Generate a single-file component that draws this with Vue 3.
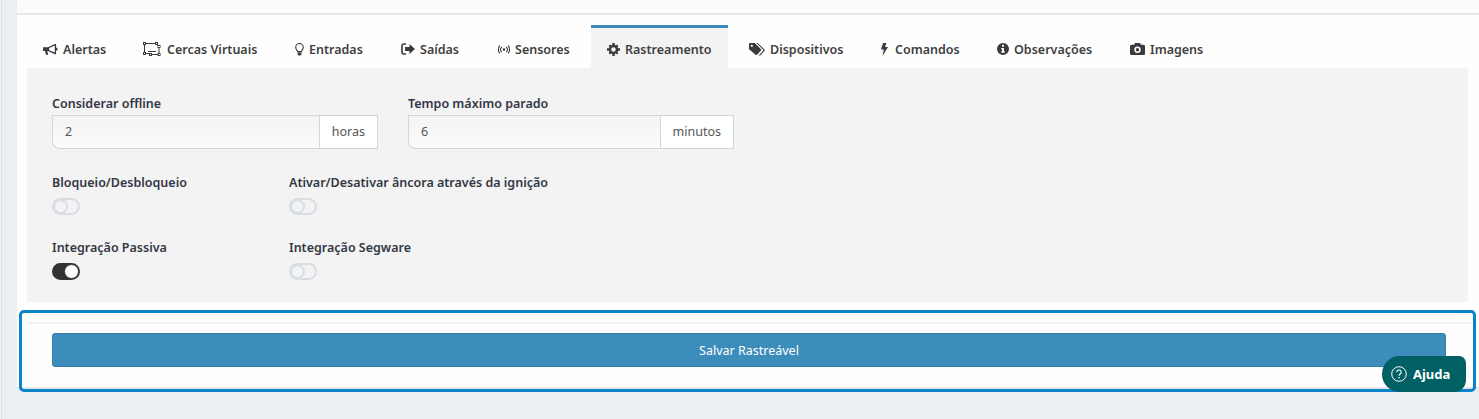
<script setup>
const tabs = [
  { label: 'Alertas', icon: 'bullhorn', width: 95 },
  { label: 'Cercas Virtuais', icon: 'fence', width: 147 },
  { label: 'Entradas', icon: 'bulb', width: 101 },
  { label: 'Saídas', icon: 'signout', width: 92 },
  { label: 'Sensores', icon: 'sensor', width: 104 },
  { label: 'Rastreamento', icon: 'cog', width: 137, active: true },
  { label: 'Dispositivos', icon: 'tags', width: 127 },
  { label: 'Comandos', icon: 'bolt', width: 111 },
  { label: 'Observações', icon: 'info', width: 128 },
  { label: 'Imagens', icon: 'camera', width: 105 },
]
</script>

<template>
  <div class="page">
    <div class="content">
      <div class="topbar"></div>
      <div class="card">
        <div class="tabs">
          <div v-for="tab in tabs" :key="tab.label" class="tab" :class="{ active: tab.active }" :style="{ width: tab.width + 'px' }">
            <svg v-if="tab.icon === 'bullhorn'" class="icon" width="15" height="13" viewBox="0 0 16 14">
              <path d="M0 4.500h5.200L12.600 1h1.400v11h-1.400L5.200 8.600H4.600l.9 4H3l-.8-4H0z" />
              <path d="M12.600 2.800 6.600 5.300v2.600l6 2.400z" fill="#fff" />
              <path d="M14 5h1.500v3H14z" />
            </svg>
            <svg v-else-if="tab.icon === 'fence'" class="icon" width="19" height="14" viewBox="0 0 19 14">
              <g fill="none" stroke="#3a3a3a" stroke-width="1">
                <path d="M2.500 1.500h10M1.500 2.500v8M2.500 11.500h4M8.500 12.500h7M13.500 2.500 15.500 3.500M16 5.500v6M5 9.500h8" />
                <rect x=".5" y=".5" width="2" height="2" />
                <rect x="12.500" y=".5" width="2" height="2" />
                <rect x="15" y="3.500" width="2" height="2" />
                <rect x=".5" y="10.500" width="2" height="2" />
                <rect x="6.500" y="11.500" width="2" height="2" />
                <rect x="15" y="11.500" width="2" height="2" />
              </g>
            </svg>
            <svg v-else-if="tab.icon === 'bulb'" class="icon" width="9" height="13" viewBox="0 0 9 13">
              <path d="M2.600 8.600C2 7 .7 6.400.7 4.300a3.800 3.800 0 0 1 7.600 0C8.300 6.400 7 7 6.400 8.600z" fill="none" stroke="#3a3a3a" stroke-width="1.100" />
              <path d="M2.500 9.400h4v1.500l-1 1.600h-2l-1-1.600z" />
            </svg>
            <svg v-else-if="tab.icon === 'signout'" class="icon" width="14" height="12" viewBox="0 0 14 12">
              <path d="M5 1H2.500A1.500 1.500 0 0 0 1 2.500v7A1.500 1.500 0 0 0 2.500 11H5" fill="none" stroke="#3a3a3a" stroke-width="1.600" />
              <path d="M4 4h4.500V1L14 6l-5.500 5V8H4z" />
            </svg>
            <svg v-else-if="tab.icon === 'sensor'" class="icon" width="12" height="9" viewBox="0 0 12 9">
              <circle cx="6" cy="4.500" r="1.300" />
              <path d="M3.700 1.800a4 4 0 0 0 0 5.400M8.300 1.800a4 4 0 0 1 0 5.400M1.800.6a6.500 6.500 0 0 0 0 7.800M10.200.6a6.500 6.500 0 0 1 0 7.800" fill="none" stroke="#3a3a3a" stroke-width="1.100" />
            </svg>
            <svg v-else-if="tab.icon === 'cog'" class="icon" width="13" height="13" viewBox="0 0 13 13">
              <circle cx="6.500" cy="6.500" r="3.500" fill="none" stroke="#3a3a3a" stroke-width="2.400" />
              <path d="M5.300 0h2.400v2H5.300zM5.300 11h2.400v2H5.300zM0 5.300h2v2.400H0zM11 5.300h2v2.400h-2z" />
              <path d="M1.600 3.100 3.100 1.600l1.300 1.300-1.500 1.500zM9.900 1.600l1.500 1.500-1.300 1.300-1.500-1.500zM1.600 9.900l1.300-1.300 1.500 1.500-1.500 1.300zM8.600 10.100l1.500-1.500 1.300 1.300-1.500 1.500z" />
            </svg>
            <svg v-else-if="tab.icon === 'tags'" class="icon" width="16" height="13" viewBox="0 0 16 13">
              <path d="M0 1a1 1 0 0 1 1-1h4.800l6.200 6.200a1 1 0 0 1 0 1.400l-4 4.100a1 1 0 0 1-1.400 0L0 6.200zM2.800 1.700a1.100 1.100 0 1 0 0 2.200 1.100 1.100 0 0 0 0-2.200z" fill-rule="evenodd" />
              <path d="M7.500 0h1.200l6.500 6.300a1.400 1.400 0 0 1 0 1.900l-4.100 4.300H9.600l4.300-4.600a1 1 0 0 0 0-1.300z" />
            </svg>
            <svg v-else-if="tab.icon === 'bolt'" class="icon" width="9" height="13" viewBox="0 0 9 13">
              <path d="M2 0h3.400L4 4h3L1.500 13l1.300-6.600H0z" />
            </svg>
            <svg v-else-if="tab.icon === 'info'" class="icon" width="12" height="12" viewBox="0 0 12 12">
              <path fill-rule="evenodd" d="M6 0a6 6 0 1 1 0 12A6 6 0 0 1 6 0zM5 1.800v2h2v-2zM4.200 5v1.200H5v2.400h-.8v1.200h3.600V8.600H7V5z" />
            </svg>
            <svg v-else class="icon" width="15" height="12" viewBox="0 0 15 12">
              <path fill-rule="evenodd" d="M1.500 1.800H4L5 0h5l1 1.800h2.500A1.500 1.500 0 0 1 15 3.300v7.200a1.500 1.500 0 0 1-1.500 1.500h-12A1.500 1.500 0 0 1 0 10.500V3.300a1.500 1.500 0 0 1 1.500-1.500zM7.500 3.500a3.200 3.200 0 1 0 0 6.400 3.200 3.200 0 0 0 0-6.400zM7.500 5a1.700 1.700 0 1 1 0 3.400 1.700 1.700 0 0 1 0-3.400z" />
            </svg>
            <span>{{ tab.label }}</span>
          </div>
        </div>
        <div class="pane">
          <div class="inputs">
            <div class="field field-a">
              <label>Considerar offline</label>
              <div class="group">
                <div class="input">2</div>
                <div class="addon">horas</div>
              </div>
            </div>
            <div class="field field-b">
              <label>Tempo máximo parado</label>
              <div class="group">
                <div class="input">6</div>
                <div class="addon">minutos</div>
              </div>
            </div>
          </div>
          <div class="switches">
            <div class="sw-item">
              <label>Bloqueio/Desbloqueio</label>
              <div class="switch"><i></i></div>
            </div>
            <div class="sw-item">
              <label>Ativar/Desativar âncora através da ignição</label>
              <div class="switch"><i></i></div>
            </div>
            <div class="sw-item">
              <label>Integração Passiva</label>
              <div class="switch on"><i></i></div>
            </div>
            <div class="sw-item">
              <label>Integração Segware</label>
              <div class="switch"><i></i></div>
            </div>
          </div>
        </div>
      </div>
      <div class="footer">
        <div class="footer-line"></div>
        <div class="save">Salvar Rastreável</div>
      </div>
    </div>
    <div class="help">
      <svg width="16" height="16" viewBox="0 0 16 16">
        <circle cx="8" cy="8" r="7.300" fill="none" stroke="#fff" stroke-width="1" />
        <path d="M5.800 6.200a2.200 2.200 0 1 1 3.400 1.800c-.8.500-1.200.9-1.200 1.800" fill="none" stroke="#fff" stroke-width="1.100" />
        <circle cx="8" cy="11.700" r=".8" fill="#fff" />
      </svg>
      <span>Ajuda</span>
    </div>
  </div>
</template>

<style scoped>
.page {
  position: relative;
  width: 1479px;
  height: 419px;
  overflow: hidden;
  background: #ebeff4;
  box-shadow: inset 1px 0 #eef1f5, inset 2px 0 #d9dee6;
  box-sizing: border-box;
  padding-left: 17px;
  font-family: "Noto Sans", "Open Sans", sans-serif;
  color: #3a3a3a;
}
.content {
  background: #fefefe;
  height: 389px;
  box-sizing: border-box;
  border-bottom: 2px solid #e4e6e9;
}
.topbar {
  height: 13px;
  background: #fbfbfb;
  border-bottom: 2px solid #e4e6e9;
}
.card {
  padding: 10px 11px 0 10px;
}
.tabs {
  display: flex;
  gap: 5px;
  height: 43px;
}
.tab {
  display: flex;
  align-items: center;
  gap: 5px;
  box-sizing: border-box;
  font-size: 12.500px;
  font-weight: 600;
  color: #3f3f3f;
  white-space: nowrap;
  padding: 5px 0 0 16px;
}
.tab.active {
  background: #f3f3f3;
  border-top: 3px solid #3d8dbc;
  padding-top: 2px;
}
.icon {
  fill: #3a3a3a;
  flex: none;
}
.pane {
  background: #f3f3f3;
  height: 234px;
  padding: 27px 25px 0;
  box-sizing: border-box;
  border-radius: 0 0 3px 3px;
}
label {
  display: block;
  font-size: 12.500px;
  font-weight: 600;
  color: #323844;
  line-height: 17px;
  white-space: nowrap;
}
.inputs {
  display: flex;
  gap: 30px;
}
.field-a { width: 326px; }
.field-b { width: 326px; }
.group {
  display: flex;
  height: 34px;
  margin-top: 3px;
}
.input {
  flex: 1;
  border: 1px solid #d2d6de;
  border-right: 0;
  border-radius: 0 0 0 8px;
  background: linear-gradient(#f3f3f3, #fcfcfc);
  padding-left: 12px;
  font-size: 12.500px;
  line-height: 32px;
  color: #555;
}
.addon {
  border: 1px solid #d2d6de;
  background: #fff;
  padding: 0 12px;
  font-size: 12.500px;
  line-height: 32px;
  color: #555;
}
.switches {
  display: grid;
  grid-template-columns: 237px 1fr;
  row-gap: 24px;
  margin-top: 25px;
}
.switch {
  position: relative;
  width: 28px;
  height: 17px;
  margin-top: 7px;
  border: 2px solid #d8dce4;
  border-radius: 9px;
  box-sizing: border-box;
}
.switch i {
  position: absolute;
  left: -1px;
  top: -1px;
  width: 15px;
  height: 15px;
  border: 2px solid #d8dce4;
  border-radius: 50%;
  box-sizing: border-box;
}
.switch.on {
  background: #333;
  border-color: #333;
}
.switch.on i {
  left: auto;
  right: -1px;
  background: #fff;
  border: 1px solid #333;
}
.footer {
  margin: 11px 6px 0 5px;
  height: 76px;
  outline: 3px solid #0984c6;
  border-radius: 2px;
  padding-top: 9px;
  box-sizing: border-box;
}
.footer-line {
  height: 2px;
  background: #f2f2f2;
  margin: 0 0 9px 5px;
}
.save {
  height: 34px;
  margin: 0 27px 0 30px;
  background: #3d8dbc;
  border: 1px solid #367fa9;
  border-radius: 3px;
  box-sizing: border-box;
  color: #fff;
  font-size: 12.500px;
  line-height: 33px;
  text-align: center;
}
.help {
  position: absolute;
  left: 1382px;
  top: 356px;
  width: 84px;
  height: 36px;
  border-radius: 18px 7px 12px 18px;
  background: #006064;
  color: #fff;
  font-size: 13px;
  font-weight: 700;
  display: flex;
  align-items: center;
  gap: 6px;
  padding-left: 9px;
  box-sizing: border-box;
}
</style>

<style>
html, body { margin: 0; background: #ebeff4; }
</style>
